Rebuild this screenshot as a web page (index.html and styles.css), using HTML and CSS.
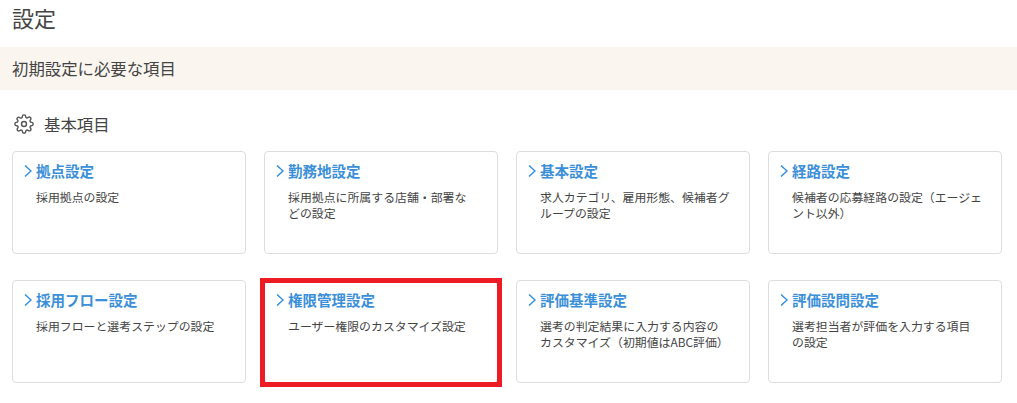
FILE: index.html
```html
<!DOCTYPE html>
<html lang="ja">

<head>
  <meta charset="UTF-8">
  <meta name="viewport" content="width=device-width, initial-scale=1.0">
  <title>設定</title>
  <link rel="stylesheet" href="styles.css">
</head>

<body>
  <h1 class="page-title">設定</h1>
  <h2 class="band">初期設定に必要な項目</h2>

  <h3 class="section-title">
    <svg class="gear" viewBox="0 0 24 24" fill="none" stroke="#555" stroke-width="1.7" stroke-linecap="round" stroke-linejoin="round">
      <circle cx="12" cy="12" r="3"></circle>
      <path d="M19.4 15a1.65 1.65 0 0 0 .33 1.82l.06.06a2 2 0 1 1-2.83 2.83l-.06-.06a1.65 1.65 0 0 0-1.82-.33 1.65 1.65 0 0 0-1 1.51V21a2 2 0 1 1-4 0v-.09a1.65 1.65 0 0 0-1-1.51 1.65 1.65 0 0 0-1.82.33l-.06.06a2 2 0 1 1-2.83-2.83l.06-.06a1.65 1.65 0 0 0 .33-1.82 1.65 1.65 0 0 0-1.51-1H3a2 2 0 1 1 0-4h.09a1.65 1.65 0 0 0 1.51-1 1.65 1.65 0 0 0-.33-1.82l-.06-.06a2 2 0 1 1 2.83-2.83l.06.06a1.65 1.65 0 0 0 1.82.33h.08a1.65 1.65 0 0 0 1-1.51V3a2 2 0 1 1 4 0v.09a1.65 1.65 0 0 0 1 1.51 1.65 1.65 0 0 0 1.82-.33l.06-.06a2 2 0 1 1 2.83 2.83l-.06.06a1.65 1.65 0 0 0-.33 1.82v.08a1.65 1.65 0 0 0 1.51 1H21a2 2 0 1 1 0 4h-.09a1.65 1.65 0 0 0-1.51 1z"></path>
    </svg>
    基本項目
  </h3>

  <div class="cards">
    <a class="card" href="#">
      <div class="card-title"><svg class="arrow" viewBox="0 0 8 12"><path d="M1 .5l6 5.5-6 5.5"></path></svg>拠点設定</div>
      <p class="card-text">採用拠点の設定</p>
    </a>
    <a class="card" href="#">
      <div class="card-title"><svg class="arrow" viewBox="0 0 8 12"><path d="M1 .5l6 5.5-6 5.5"></path></svg>勤務地設定</div>
      <p class="card-text">採用拠点に所属する店舗・部署な<br>どの設定</p>
    </a>
    <a class="card" href="#">
      <div class="card-title"><svg class="arrow" viewBox="0 0 8 12"><path d="M1 .5l6 5.5-6 5.5"></path></svg>基本設定</div>
      <p class="card-text">求人カテゴリ、雇用形態、候補者グ<br>ループの設定</p>
    </a>
    <a class="card" href="#">
      <div class="card-title"><svg class="arrow" viewBox="0 0 8 12"><path d="M1 .5l6 5.5-6 5.5"></path></svg>経路設定</div>
      <p class="card-text">候補者の応募経路の設定（エージェ<br>ント以外）</p>
    </a>
    <a class="card" href="#">
      <div class="card-title"><svg class="arrow" viewBox="0 0 8 12"><path d="M1 .5l6 5.5-6 5.5"></path></svg>採用フロー設定</div>
      <p class="card-text">採用フローと選考ステップの設定</p>
    </a>
    <a class="card card-marked" href="#">
      <div class="card-title"><svg class="arrow" viewBox="0 0 8 12"><path d="M1 .5l6 5.5-6 5.5"></path></svg>権限管理設定</div>
      <p class="card-text">ユーザー権限のカスタマイズ設定</p>
    </a>
    <a class="card" href="#">
      <div class="card-title"><svg class="arrow" viewBox="0 0 8 12"><path d="M1 .5l6 5.5-6 5.5"></path></svg>評価基準設定</div>
      <p class="card-text">選考の判定結果に入力する内容の<br>カスタマイズ（初期値はABC評価）</p>
    </a>
    <a class="card" href="#">
      <div class="card-title"><svg class="arrow" viewBox="0 0 8 12"><path d="M1 .5l6 5.5-6 5.5"></path></svg>評価設問設定</div>
      <p class="card-text">選考担当者が評価を入力する項目<br>の設定</p>
    </a>
  </div>
</body>

</html>
```

FILE: styles.css
```css
body {
  margin: 0;
  padding: 0;
  min-height: 100vh;
  background-color: #fff;
  color: #444;
  font-family: "Noto Sans CJK JP", "Noto Sans", sans-serif;
}

.page-title {
  margin: 0;
  padding: 2px 12px 0;
  height: 47px;
  box-sizing: border-box;
  font-size: 22px;
  font-weight: 400;
  line-height: 30px;
}

.band {
  margin: 0;
  height: 43px;
  padding: 0 12px;
  background-color: #faf5ef;
  font-size: 16.4px;
  font-weight: 400;
  line-height: 43px;
}

.section-title {
  display: flex;
  align-items: center;
  gap: 10px;
  margin: 21px 0 0 14px;
  height: 26px;
  font-size: 16.4px;
  font-weight: 400;
  line-height: 26px;
}

.gear {
  width: 20px;
  height: 20px;
}

.cards {
  display: grid;
  grid-template-columns: repeat(4, 234px);
  grid-auto-rows: 103px;
  column-gap: 18px;
  row-gap: 26px;
  margin: 14px 0 0 12px;
}

.card {
  display: block;
  position: relative;
  box-sizing: border-box;
  padding: 8px 10px 0 11px;
  background-color: #fff;
  border: 1px solid #ddd;
  border-radius: 4px;
  color: #444;
  text-decoration: none;
}

/* red box drawn over the card */
.card-marked::after {
  content: "";
  position: absolute;
  top: -3px;
  left: -5px;
  right: -5px;
  bottom: -5px;
  border: 5px solid #ed1c24;
}

.card-title {
  display: flex;
  align-items: center;
  gap: 4px;
  color: #3b8fd9;
  font-size: 14.5px;
  font-weight: 700;
  line-height: 22px;
}

.arrow {
  width: 8px;
  height: 12px;
  fill: none;
  stroke: #2f8fe0;
  stroke-width: 1.4;
}

.card-text {
  margin: 7px 0 0 12px;
  font-size: 11.9px;
  line-height: 16px;
  white-space: nowrap;
}
```
